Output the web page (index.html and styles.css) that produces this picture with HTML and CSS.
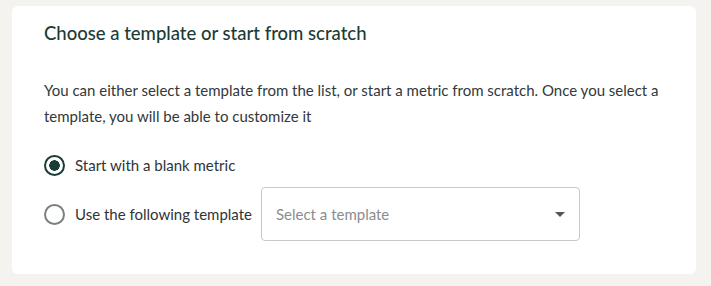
FILE: index.html
```html
<!DOCTYPE html>
<html lang="en">
<head>
    <meta charset="UTF-8">
    <title>Choose a template</title>
    <link rel="stylesheet" href="styles.css">
</head>
<body>
    <div class="card">
        <h2 class="card-title">Choose a template or start from scratch</h2>
        <p class="card-text">You can either select a template from the list, or start a metric from scratch. Once you select a template, you will be able to customize it</p>

        <div class="options">
            <label class="option">
                <span class="radio checked"></span>
                <span class="option-label">Start with a blank metric</span>
            </label>
            <label class="option">
                <span class="radio"></span>
                <span class="option-label">Use the following template</span>
                <div class="select">
                    <span class="select-placeholder">Select a template</span>
                    <span class="caret"></span>
                </div>
            </label>
        </div>
    </div>
</body>
</html>
```

FILE: styles.css
```css
body {
    margin: 0;
    padding: 6px 15px 12px 12px;
    background-color: #f5f3ef;
    font-family: Lato, "Open Sans", sans-serif;
    color: #2b2f30;
}

.card {
    background-color: #ffffff;
    border-radius: 6px;
    padding: 16px 32px 33px 32px;
}

.card-title {
    margin: 0 0 33px 0;
    font-size: 18.5px;
    font-weight: 500;
    color: #1b3b36;
}

.card-text {
    margin: 0 0 14px 0;
    font-size: 15px;
    line-height: 26px;
    color: #33383a;
}

.options {
    display: flex;
    flex-direction: column;
    gap: 0;
}

.option {
    display: flex;
    align-items: center;
    gap: 10px;
    min-height: 44px;
    font-size: 15px;
    color: #2f3436;
}

.radio {
    width: 17px;
    height: 17px;
    border: 2px solid #7a7f80;
    border-radius: 50%;
    box-sizing: content-box;
    flex-shrink: 0;
}

.radio.checked {
    border-color: #1b3b36;
    background: radial-gradient(circle, #1b3b36 0 5px, #fff 5.5px);
}

.select {
    display: flex;
    align-items: center;
    justify-content: space-between;
    width: 319px;
    height: 54px;
    margin-left: -1px;
    padding: 0 14px 0 14px;
    box-sizing: border-box;
    border: 1px solid #c8c8c8;
    border-radius: 4px;
}

.select-placeholder {
    color: #8a8d8e;
    font-size: 15px;
}

.caret {
    width: 0;
    height: 0;
    border-left: 5px solid transparent;
    border-right: 5px solid transparent;
    border-top: 5px solid #555;
}
```
